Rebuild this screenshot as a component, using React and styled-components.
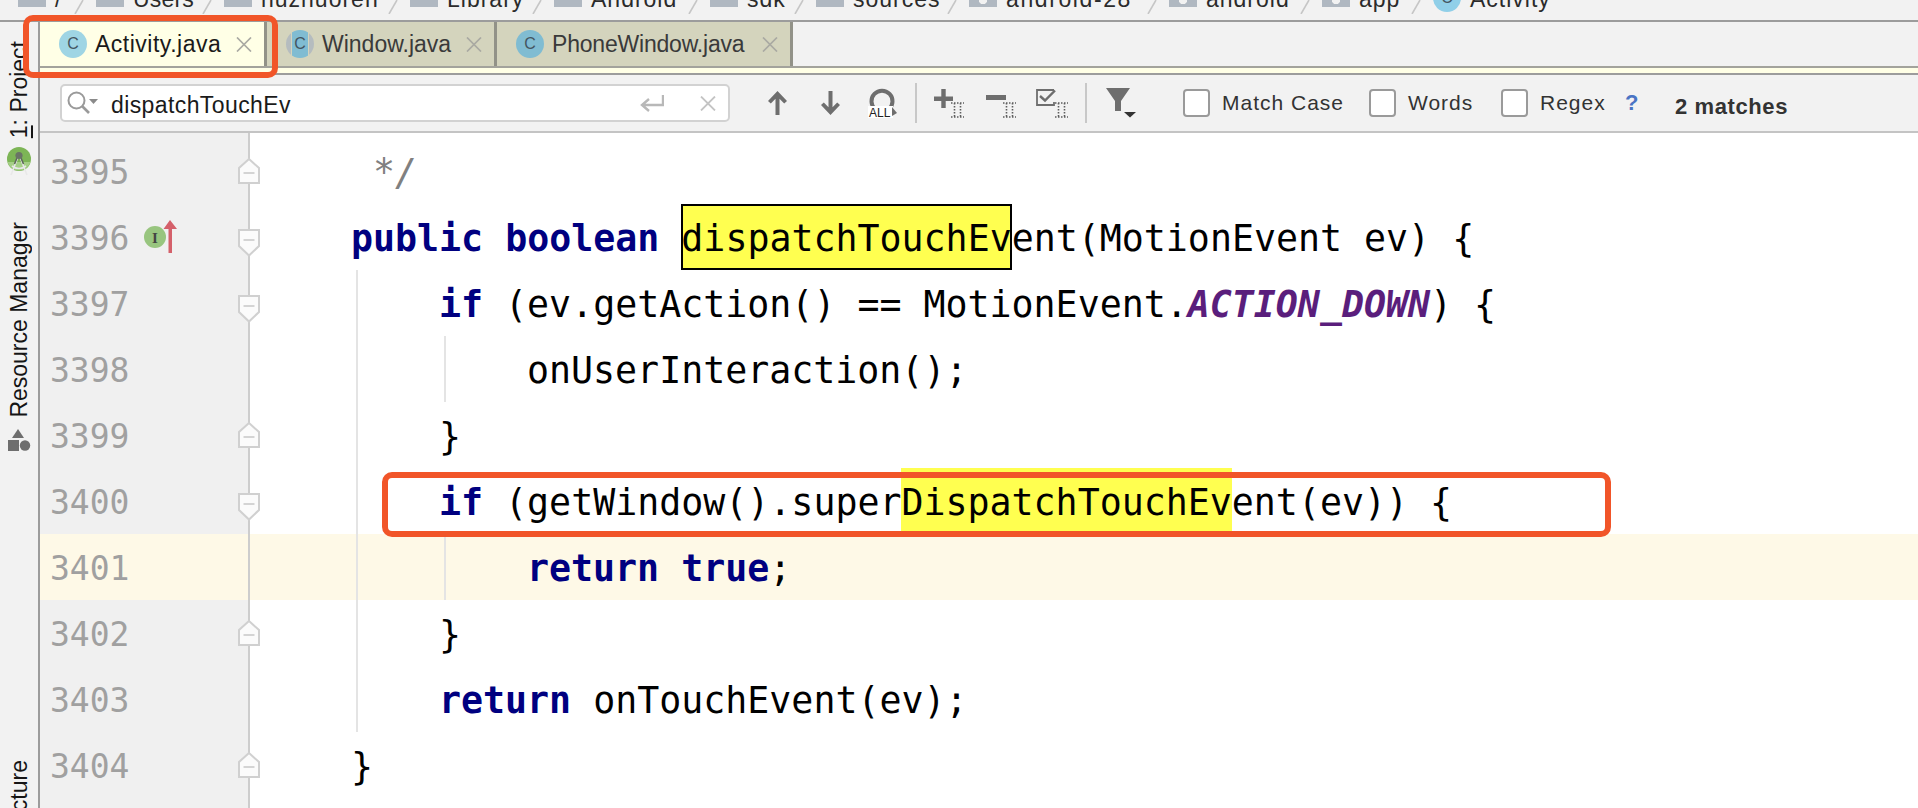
import React from 'react';
import styled, { createGlobalStyle } from 'styled-components';

const SANS = '"Liberation Sans", Arial, sans-serif';
const MONO = '"DejaVu Sans Mono", monospace';

const GlobalStyle = createGlobalStyle`
  html, body {
    margin: 0;
    padding: 0;
    background: #f2f2f2;
  }
`;

const Root = styled.div`
  position: relative;
  display: flex;
  flex-direction: column;
  width: 1918px;
  height: 808px;
  overflow: hidden;
  background: #f2f2f2;
  font-family: ${SANS};
`;

/* breadcrumb */
const Crumbs = styled.nav`
  display: flex;
  flex: none;
  height: 20px;
  padding-left: 18px;
  overflow: hidden;
  border-bottom: 2px solid #9c9c9c;
`;

const Crumb = styled.div`
  display: flex;
  flex: none;
  align-items: flex-start;
  width: ${({ $w }) => $w}px;
  height: 20px;
`;

const Folder = styled.span`
  flex: none;
  width: 28px;
  height: 7px;
  background: ${({ $pkg }) =>
    $pkg ? 'radial-gradient(circle at 50% 0, #f2f2f2 0 4px, #b0b8c1 4.5px)' : '#b0b8c1'};
`;

const ClassDot = styled.span`
  display: flex;
  flex: none;
  align-items: center;
  justify-content: center;
  width: 28px;
  height: 28px;
  margin-top: -16px;
  border-radius: 50%;
  background: #90cfe8;
  color: #445560;
  font-size: 16px;
`;

const CrumbLabel = styled.span`
  margin: -14px 0 0 9px;
  font-size: 23px;
  line-height: 26px;
  letter-spacing: ${({ $ls }) => $ls ?? 1}px;
  color: #2b2b2b;
  white-space: nowrap;
`;

const CrumbSlash = styled.svg`
  flex: none;
  width: 10px;
  height: 14px;
  margin: 0 12px 0 auto;
`;

/* workspace */
const Body = styled.div`
  display: flex;
  flex: 1;
  min-height: 0;
`;

const Rail = styled.aside`
  display: flex;
  flex: none;
  flex-direction: column;
  align-items: center;
  box-sizing: border-box;
  width: 40px;
  padding-top: 19px;
  overflow: hidden;
  border-right: 2px solid #9c9c9c;
`;

const RailLabel = styled.span`
  flex: none;
  margin-top: ${({ $mt }) => $mt || 0}px;
  font-size: 23px;
  line-height: 26px;
  color: #151515;
  white-space: nowrap;
  writing-mode: vertical-rl;
  transform: rotate(180deg);
`;

const Mnemonic = styled.span`
  text-decoration: underline;
`;

const RailIcon = styled.svg`
  flex: none;
  display: block;
  margin-top: ${({ $mt }) => $mt || 0}px;
`;

const Main = styled.div`
  display: flex;
  flex: 1;
  flex-direction: column;
  min-width: 0;
`;

const TabBar = styled.div`
  display: flex;
  flex: none;
  height: 44px;
  border-bottom: 2px solid #a3a39c;
`;

const Tab = styled.div`
  display: flex;
  flex: none;
  align-items: center;
  box-sizing: border-box;
  width: ${({ $w }) => $w}px;
  padding: 0 12px 0 19px;
  border-right: 3px solid #929288;
  background: ${({ $active }) => ($active ? '#ffffe6' : '#d4d4bd')};
  color: ${({ $active }) => ($active ? '#1a1a1a' : '#3a3a3a')};
`;

const TabIcon = styled.span`
  display: flex;
  flex: none;
  align-items: center;
  justify-content: center;
  width: 28px;
  height: 28px;
  border-radius: 50%;
  background: ${({ $mixed, $active }) =>
    $mixed
      ? 'linear-gradient(90deg, #b5bcbf 0 17%, #d4d4bd 17% 21%, #80bcd2 21% 79%, #d4d4bd 79% 83%, #b5bcbf 83%)'
      : $active
        ? '#9fd5e4'
        : '#80bcd2'};
  color: #445560;
  font-size: 16px;
`;

const TabLabel = styled.span`
  margin-left: 8px;
  font-size: 23px;
  letter-spacing: ${({ $ls }) => $ls}px;
  white-space: nowrap;
`;

const TabClose = styled.svg`
  flex: none;
  width: 16px;
  height: 15px;
  margin-left: auto;
`;

const Strip = styled.div`
  flex: none;
  height: 5px;
  border-bottom: 2px solid #9c9c9c;
  background: #ffffe6;
`;

const Toolbar = styled.div`
  display: flex;
  flex: none;
  align-items: center;
  box-sizing: border-box;
  height: 58px;
  padding-left: 20px;
  border-bottom: 2px solid #c4c4c4;
`;

const SearchField = styled.div`
  display: flex;
  flex: none;
  align-items: center;
  box-sizing: border-box;
  width: 670px;
  height: 38px;
  padding: 0 12px 0 5px;
  border: 2px solid #d2d2d2;
  border-radius: 5px;
  background: #fff;
`;

const SearchText = styled.span`
  margin: 4px 0 0 13px;
  font-size: 23px;
  letter-spacing: 0.4px;
  color: #1a1a1a;
`;

const SearchIcon = styled.svg`
  flex: none;
`;

const EnterIcon = styled.svg`
  flex: none;
  margin-left: auto;
`;

const ClearIcon = styled.svg`
  flex: none;
  margin-left: 36px;
`;

const ToolIcon = styled.svg`
  flex: none;
  display: block;
  margin-left: ${({ $ml }) => $ml}px;
`;

const ToolSep = styled.span`
  flex: none;
  width: 2px;
  height: 40px;
  margin-left: ${({ $ml }) => $ml}px;
  background: #c8c8c8;
`;

const CheckItem = styled.label`
  display: flex;
  flex: none;
  align-items: center;
  width: ${({ $w }) => $w}px;
  margin-left: ${({ $ml }) => $ml || 0}px;
  gap: 12px;
  font-size: 21px;
  letter-spacing: 1px;
  color: #333;
`;

const CheckBox = styled.span`
  flex: none;
  box-sizing: border-box;
  width: 27px;
  height: 28px;
  border: 2px solid #9a9a9a;
  border-radius: 4px;
  background: #fff;
`;

const Help = styled.span`
  flex: none;
  width: 50px;
  font-size: 22px;
  font-weight: 700;
  color: #4a74c4;
`;

const Matches = styled.span`
  flex: none;
  margin-top: 8px;
  font-size: 22px;
  font-weight: 700;
  letter-spacing: 0.6px;
  color: #333;
`;

/* editor */
const Editor = styled.div`
  display: flex;
  flex: 1;
  min-height: 0;
  background: #fff;
`;

const Gutter = styled.div`
  flex: none;
  box-sizing: border-box;
  width: 210px;
  padding-top: 5px;
  border-right: 2px solid #cdcdcd;
  background: #f0f0f0;
`;

const GutterRow = styled.div`
  position: relative;
  display: flex;
  align-items: center;
  height: 66px;
  padding-left: 10px;
  background: ${({ $current }) => ($current ? '#fef9e7' : 'transparent')};
`;

const LineNo = styled.span`
  flex: none;
  width: 94px;
  padding-top: 3px;
  font-family: ${MONO};
  font-size: 33px;
  color: #a0a0a0;
`;

const FoldMark = styled.svg`
  position: absolute;
  top: ${({ $up }) => ($up ? 20 : 25)}px;
  right: -12px;
`;

const Code = styled.div`
  flex: 1;
  min-width: 0;
  padding-top: 5px;
`;

const CodeRow = styled.div`
  display: flex;
  height: 66px;
  padding-left: 106px;
  background: ${({ $current }) => ($current ? '#fef9e7' : 'transparent')};
`;

const Guide = styled.span`
  flex: none;
  box-sizing: border-box;
  width: 88px;
  border-left: 2px solid #e4e4e4;
`;

const CodeText = styled.code`
  margin-left: -5px;
  font-family: ${MONO};
  font-size: 36.6px;
  line-height: 70px;
  color: #000;
  white-space: pre;
`;

const Keyword = styled.span`
  font-weight: 700;
  color: #000080;
`;

const Constant = styled.span`
  font-style: italic;
  font-weight: 700;
  color: #5a1e7c;
`;

const Comment = styled.span`
  font-style: italic;
  color: #808080;
`;

const Match = styled.span`
  display: inline-block;
  height: 66px;
  background: #ffff50;
  box-shadow: ${({ $selected }) => ($selected ? 'inset 0 0 0 2px #000' : 'none')};
`;

const Callout = styled.div`
  position: absolute;
  left: ${({ $x }) => $x}px;
  top: ${({ $y }) => $y}px;
  box-sizing: border-box;
  width: ${({ $w }) => $w}px;
  height: ${({ $h }) => $h}px;
  border: 6px solid #f15529;
  border-radius: 10px;
`;

const ICON = '#6e6e6e';

const Slash = () => (
  <CrumbSlash viewBox="0 0 10 14">
    <path d="M9 0 L1 14" stroke="#c6c6c6" strokeWidth="1.6" fill="none" />
  </CrumbSlash>
);

const CloseX = () => (
  <TabClose viewBox="0 0 16 15">
    <path d="M1 0.5 L15 14.5 M15 0.5 L1 14.5" stroke="#a9a9a2" strokeWidth="1.7" fill="none" />
  </TabClose>
);

// the dotted I-beam that marks the multi-caret buttons
const Carets = ({ x, y }) => (
  <g transform={`translate(${x} ${y})`} stroke="#5e5e5e" strokeWidth="1.6" strokeDasharray="1.5 1.5" fill="none">
    <path d="M0 1 H13 M0 15 H13 M3.5 1 V15 M9.5 1 V15" />
  </g>
);

const ArrowUp = ({ ml }) => (
  <ToolIcon $ml={ml} width="19" height="24" viewBox="0 0 19 24">
    <path fill={ICON} d="M9.5 0 L19 10 L16.2 12.6 L11.5 7.8 V24 H7.5 V7.8 L2.8 12.6 L0 10 Z" />
  </ToolIcon>
);

const ArrowDown = ({ ml }) => (
  <ToolIcon $ml={ml} width="19" height="24" viewBox="0 0 19 24">
    <path fill={ICON} d="M9.5 24 L19 14 L16.2 11.4 L11.5 16.2 V0 H7.5 V16.2 L2.8 11.4 L0 14 Z" />
  </ToolIcon>
);

const FindAll = ({ ml }) => (
  <ToolIcon $ml={ml} width="30" height="30" viewBox="0 0 30 30">
    <path d="M7 21 A10.5 10.5 0 1 1 21 21" stroke={ICON} strokeWidth="4" fill="none" />
    <rect x="0" y="18" width="25" height="12" fill="#fff" />
    <text x="1" y="28.5" fontSize="12" fontFamily={SANS} fill="#222">ALL</text>
    <path d="M24 19 L29 25 L24 28 Z" fill={ICON} />
  </ToolIcon>
);

const AddCaret = ({ ml }) => (
  <ToolIcon $ml={ml} width="30" height="29" viewBox="0 0 30 29">
    <path d="M0 7.5 H19 V12 H0 Z M7.3 0 H11.7 V19 H7.3 Z" fill={ICON} />
    <Carets x="17" y="13" />
  </ToolIcon>
);

const RemoveCaret = ({ ml }) => (
  <ToolIcon $ml={ml} width="30" height="29" viewBox="0 0 30 29">
    <path d="M0 6 H20 V11 H0 Z" fill={ICON} />
    <Carets x="17" y="13" />
  </ToolIcon>
);

const CheckCaret = ({ ml }) => (
  <ToolIcon $ml={ml} width="32" height="29" viewBox="0 0 32 29">
    <path d="M18 1 H1 V16 H18 V13" stroke={ICON} strokeWidth="1.8" fill="none" />
    <path d="M4 7 L9 11.5 L19 1.5" stroke={ICON} strokeWidth="2.4" fill="none" />
    <Carets x="19" y="13" />
  </ToolIcon>
);

const Filter = ({ ml }) => (
  <ToolIcon $ml={ml} width="30" height="30" viewBox="0 0 30 30">
    <path d="M0 0 H24 L15 13 V23 H9 V13 Z" fill={ICON} />
    <path d="M18 24 H30 L24 29.5 Z" fill="#333" />
  </ToolIcon>
);

const FoldIcon = ({ up }) => (
  <FoldMark $up={up} width="22" height="28" viewBox="0 0 22 28">
    {up ? (
      <path d="M1 25 V10 L11 1 L21 10 V25 Z" fill="#fbfbfb" stroke="#d0d0d0" strokeWidth="2" />
    ) : (
      <path d="M1 1 H21 V17 L11 26.5 L1 17 Z" fill="#fbfbfb" stroke="#d0d0d0" strokeWidth="2" />
    )}
    <path d={up ? 'M5.5 15 H16.5' : 'M5.5 11 H16.5'} stroke="#d4d4d4" strokeWidth="2" />
  </FoldMark>
);

const crumbs = [
  { w: 78, label: '/' },
  { w: 128, label: 'Users', ls: 0.2 },
  { w: 186, label: 'huzhuoren' },
  { w: 144, label: 'Library' },
  { w: 156, label: 'Android' },
  { w: 106, label: 'sdk' },
  { w: 153, label: 'sources' },
  { w: 200, label: 'android-28', pkg: true, ls: 1.6 },
  { w: 153, label: 'android', pkg: true },
  { w: 111, label: 'app', pkg: true },
];

const lines = [
  { no: 3395, fold: 'up', code: <Comment> */</Comment> },
  {
    no: 3396,
    fold: 'down',
    marker: true,
    code: (
      <>
        <Keyword>public boolean</Keyword> <Match $selected>dispatchTouchEv</Match>ent(MotionEvent ev) {'{'}
      </>
    ),
  },
  {
    no: 3397,
    fold: 'down',
    guides: 1,
    code: (
      <>
        <Keyword>if</Keyword> (ev.getAction() == MotionEvent.<Constant>ACTION_DOWN</Constant>) {'{'}
      </>
    ),
  },
  { no: 3398, guides: 2, code: 'onUserInteraction();' },
  { no: 3399, fold: 'up', guides: 1, code: '}' },
  {
    no: 3400,
    fold: 'down',
    guides: 1,
    code: (
      <>
        <Keyword>if</Keyword> (getWindow().super<Match>DispatchTouchEv</Match>ent(ev)) {'{'}
      </>
    ),
  },
  {
    no: 3401,
    current: true,
    guides: 2,
    code: (
      <>
        <Keyword>return true</Keyword>;
      </>
    ),
  },
  { no: 3402, fold: 'up', guides: 1, code: '}' },
  {
    no: 3403,
    guides: 1,
    code: (
      <>
        <Keyword>return</Keyword> onTouchEvent(ev);
      </>
    ),
  },
  { no: 3404, fold: 'up', code: '}' },
];

export default function App() {
  return (
    <Root>
      <GlobalStyle />
      <Crumbs>
        {crumbs.map((c) => (
          <Crumb key={c.label} $w={c.w}>
            <Folder $pkg={c.pkg} />
            <CrumbLabel $ls={c.ls}>{c.label}</CrumbLabel>
            <Slash />
          </Crumb>
        ))}
        <Crumb $w={120}>
          <ClassDot>C</ClassDot>
          <CrumbLabel>Activity</CrumbLabel>
        </Crumb>
      </Crumbs>
      <Body>
        <Rail>
          <RailLabel>
            <Mnemonic>1</Mnemonic>: Project
          </RailLabel>
          <RailIcon $mt={9} width="26" height="29" viewBox="0 0 26 29">
            <circle cx="13" cy="12" r="12" fill="#7db556" />
            <path d="M1.5 15 A12 12 0 0 0 24.5 15 Z" fill="#a5cf86" />
            <path d="M12 10 L5 28 M14 10 L21 28 M6 19 Q13 24 20 19" stroke="#e8e8e8" strokeWidth="1.6" fill="none" />
            <path d="M11 11 L8.5 17 M15 11 L17.5 17" stroke="#5d6a58" strokeWidth="1.6" fill="none" />
            <circle cx="13" cy="8.5" r="3.6" fill="#6a7466" />
          </RailIcon>
          <RailLabel $mt={46}>Resource Manager</RailLabel>
          <RailIcon $mt={11} width="24" height="23" viewBox="0 0 24 23">
            <path d="M11 0 L17 9 H5 Z" fill="#6e6e6e" />
            <rect x="1" y="11" width="11" height="11" fill="#6e6e6e" />
            <circle cx="18" cy="16.5" r="5.2" fill="#6e6e6e" />
          </RailIcon>
          <RailLabel $mt={308}>7: Structure</RailLabel>
        </Rail>
        <Main>
          <TabBar>
            <Tab $active $w={227}>
              <TabIcon $active>C</TabIcon>
              <TabLabel $ls={0.5}>Activity.java</TabLabel>
              <CloseX />
            </Tab>
            <Tab $w={230}>
              <TabIcon $mixed>C</TabIcon>
              <TabLabel $ls={0}>Window.java</TabLabel>
              <CloseX />
            </Tab>
            <Tab $w={296}>
              <TabIcon>C</TabIcon>
              <TabLabel $ls={-0.2}>PhoneWindow.java</TabLabel>
              <CloseX />
            </Tab>
          </TabBar>
          <Strip />
          <Toolbar>
            <SearchField>
              <SearchIcon width="31" height="24" viewBox="0 0 31 24">
                <circle cx="9.5" cy="9.5" r="8" stroke="#9a9a9a" strokeWidth="2" fill="none" />
                <path d="M15 15 L22 22" stroke="#9a9a9a" strokeWidth="2.6" />
                <path d="M22 8 H31 L26.5 13 Z" fill="#8a8a8a" />
              </SearchIcon>
              <SearchText>dispatchTouchEv</SearchText>
              <EnterIcon width="24" height="17" viewBox="0 0 24 17">
                <path d="M23 0 V10 H3 M9 4 L2 10 L9 16" stroke="#b8b8b8" strokeWidth="2.4" fill="none" />
              </EnterIcon>
              <ClearIcon width="16" height="15" viewBox="0 0 16 15">
                <path d="M1 0.5 L15 14.5 M15 0.5 L1 14.5" stroke="#c4c4c4" strokeWidth="1.8" fill="none" />
              </ClearIcon>
            </SearchField>
            <ArrowUp ml={38} />
            <ArrowDown ml={34} />
            <FindAll ml={28} />
            <ToolSep $ml={17} />
            <AddCaret ml={17} />
            <RemoveCaret ml={22} />
            <CheckCaret ml={20} />
            <ToolSep $ml={17} />
            <Filter ml={19} />
            <CheckItem $ml={47} $w={186}>
              <CheckBox />
              Match Case
            </CheckItem>
            <CheckItem $w={132}>
              <CheckBox />
              Words
            </CheckItem>
            <CheckItem $w={124}>
              <CheckBox />
              Regex
            </CheckItem>
            <Help>?</Help>
            <Matches>2 matches</Matches>
          </Toolbar>
          <Editor>
            <Gutter>
              {lines.map((l) => (
                <GutterRow key={l.no} $current={l.current}>
                  <LineNo>{l.no}</LineNo>
                  {l.marker && (
                    <svg width="34" height="34" viewBox="0 0 34 34">
                      <circle cx="11" cy="17" r="11" fill="#98c57f" />
                      <text x="11" y="22.5" textAnchor="middle" fontSize="15" fontWeight="700" fontFamily='"Liberation Serif", serif' fill="#444">I</text>
                      <path d="M26 0 L33 9 H28 V33 H24.5 V9 H19.5 Z" fill="#d4606a" />
                    </svg>
                  )}
                  {l.fold && <FoldIcon up={l.fold === 'up'} />}
                </GutterRow>
              ))}
            </Gutter>
            <Code>
              {lines.map((l) => (
                <CodeRow key={l.no} $current={l.current}>
                  {Array.from({ length: l.guides || 0 }, (_, i) => (
                    <Guide key={i} />
                  ))}
                  <CodeText>{l.code}</CodeText>
                </CodeRow>
              ))}
            </Code>
          </Editor>
        </Main>
      </Body>
      <Callout $x={23} $y={15} $w={255} $h={63} />
      <Callout $x={382} $y={472} $w={1229} $h={65} />
    </Root>
  );
}
